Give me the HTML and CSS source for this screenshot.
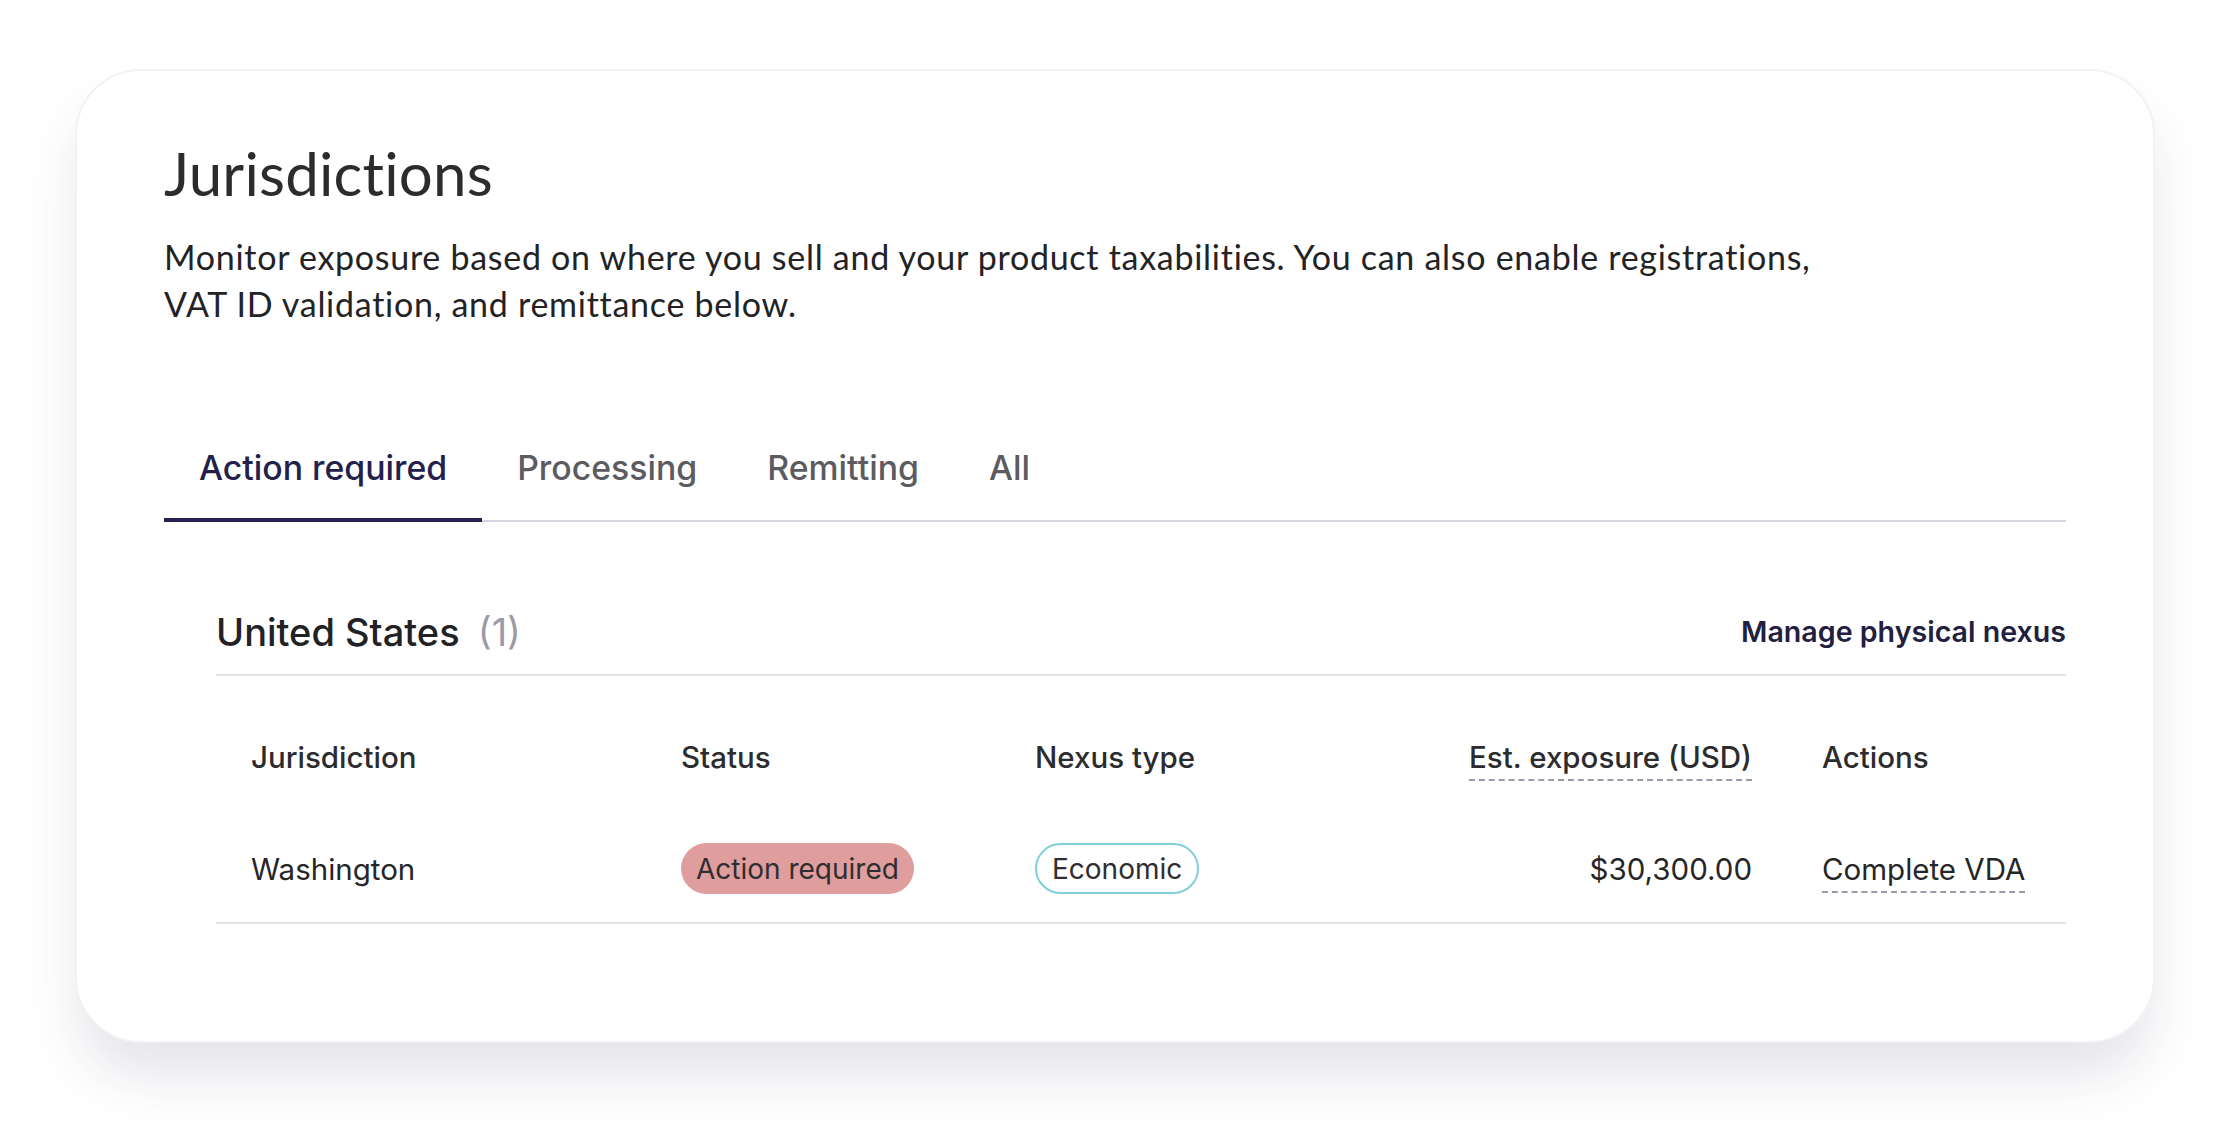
FILE: index.html
```html
<!DOCTYPE html>
<html lang="en">
<head>
<meta charset="utf-8">
<title>Jurisdictions</title>
<link rel="stylesheet" href="styles.css">
</head>
<body>
<main class="card">
  <h1 class="title">Jurisdictions</h1>
  <p class="intro">Monitor exposure based on where you sell and your product taxabilities. You can also enable registrations,<br>VAT ID validation, and remittance below.</p>

  <nav class="tabs">
    <a class="tab tab-active">Action required</a>
    <a class="tab">Processing</a>
    <a class="tab">Remitting</a>
    <a class="tab">All</a>
  </nav>

  <section class="region">
    <header class="region-head">
      <h2 class="region-title">United States <span class="count">(1)</span></h2>
      <a class="region-link">Manage physical nexus</a>
    </header>

    <div class="table">
      <div class="row row-head">
        <div class="cell">Jurisdiction</div>
        <div class="cell">Status</div>
        <div class="cell">Nexus type</div>
        <div class="cell cell-num"><span class="dotted">Est. exposure (USD)</span></div>
        <div class="cell cell-last">Actions</div>
      </div>
      <div class="row row-body">
        <div class="cell">Washington</div>
        <div class="cell"><span class="badge badge-alert">Action required</span></div>
        <div class="cell"><span class="badge badge-outline">Economic</span></div>
        <div class="cell cell-num">$30,300.00</div>
        <div class="cell cell-last"><span class="dotted">Complete VDA</span></div>
      </div>
    </div>
  </section>
</main>
</body>
</html>
```

FILE: styles.css
```css
* { box-sizing: border-box; }

html, body {
  margin: 0;
  padding: 0;
  background: #ffffff;
}

body {
  width: 2224px;
  height: 1144px;
  overflow: hidden;
  font-family: "Inter", "Liberation Sans", sans-serif;
  color: #2a2a2e;
}

.card {
  display: flex;
  flex-direction: column;
  width: 2080px;
  height: 974px;
  margin: 69px 0 0 75px;
  padding: 0 87px 0 87px;
  background: #ffffff;
  border: 2px solid #f2f2f3;
  border-radius: 66px;
  box-shadow: 0 36px 56px -6px rgba(60, 60, 100, 0.14);
}

.title {
  margin: 66px 0 0 0;
  font-family: "Lato", sans-serif;
  font-weight: 400;
  font-size: 60px;
  line-height: 72px;
  color: #2c2c2e;
  letter-spacing: 0.2px;
}

.intro {
  margin: 24px 0 0 0;
  font-family: "Lato", sans-serif;
  font-size: 34px;
  line-height: 47px;
  letter-spacing: 0.72px;
  color: #232325;
}

.tabs {
  display: flex;
  margin-top: 119px;
  border-bottom: 2px solid #d6d6de;
}

.tab {
  padding: 0 35px 28px;
  font-size: 33.8px;
  line-height: 44px;
  font-weight: 500;
  color: #5b5b61;
  margin-bottom: -2px;
  border-bottom: 4px solid transparent;
}

.tab-active {
  color: #23214c;
  border-bottom-color: #24214f;
}

.region {
  margin: 87px 0 0 52px;
}

.region-head {
  display: flex;
  justify-content: space-between;
  align-items: center;
  padding-bottom: 19px;
  border-bottom: 2px solid #e3e3e5;
}

.region-title {
  margin: 0;
  font-size: 38px;
  line-height: 46px;
  font-weight: 500;
  color: #222224;
}

.count {
  margin-left: 8px;
  font-weight: 400;
  color: #9b9aa6;
}

.region-link {
  font-size: 28.6px;
  line-height: 46px;
  font-weight: 600;
  color: #22203f;
}

.row {
  display: grid;
  grid-template-columns: 430px 354px 400px 387px 1fr;
  align-items: center;
}

.row-head {
  padding: 60px 0 32px;
  font-size: 29.5px;
  line-height: 42px;
  font-weight: 500;
  color: #2c2c2f;
}

.row-body {
  padding: 33px 0 28px;
  font-size: 29.5px;
  line-height: 42px;
  color: #262628;
  border-bottom: 2px solid #e3e3e5;
}

.cell {
  padding: 0 35px;
  white-space: nowrap;
}

.cell-last {
  padding-right: 0;
}

.cell-num {
  text-align: right;
}

.dotted {
  padding-bottom: 4px;
  border-bottom: 2px dashed #9c9ba8;
}

.badge {
  display: inline-flex;
  align-items: center;
  height: 51px;
  padding: 0 15px;
  border-radius: 26px;
  font-size: 28px;
  color: #2e2e31;
}

.badge-alert {
  background: #e09d9d;
}

.badge-outline {
  border: 2px solid #7fcfdc;
  background: #ffffff;
}
```
